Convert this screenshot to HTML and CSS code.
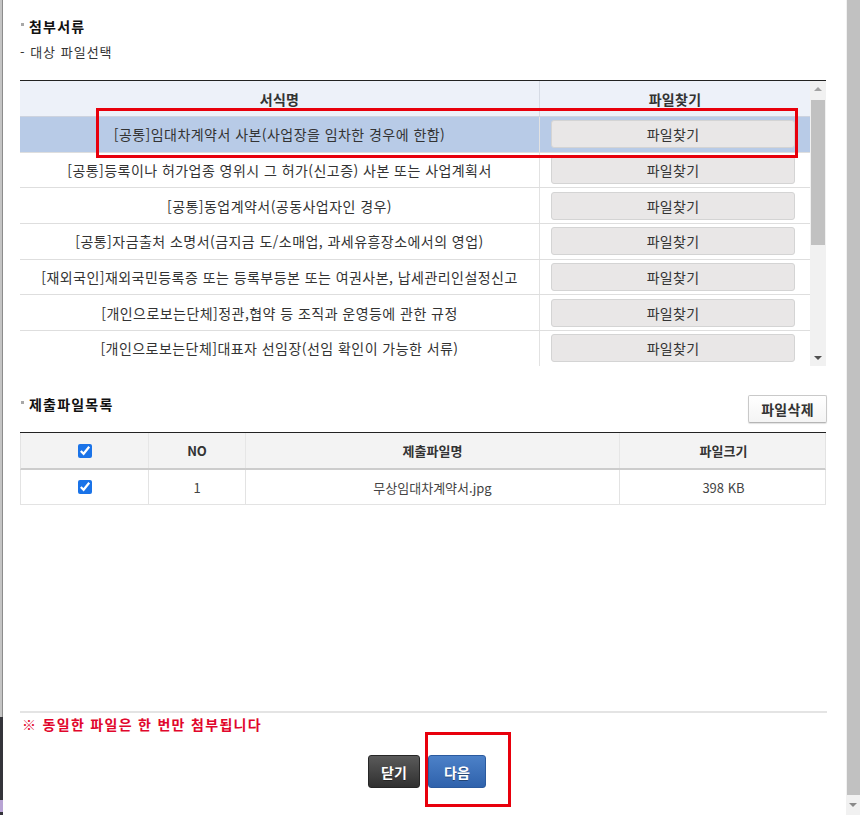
FILE: index.html
```html
<!DOCTYPE html>
<html lang="ko">
<head>
<meta charset="utf-8">
<title>첨부서류</title>
<link rel="stylesheet" href="styles.css">
</head>
<body>
<div class="frame">
  <div class="edge">
    <div class="edge-top"></div>
    <div class="edge-bottom"><div class="edge-mark"></div></div>
  </div>

  <div class="dialog">
    <h2 class="sec-title">첨부서류</h2>
    <p class="sub">- 대상 파일선택</p>

    <div class="grid-wrap">
      <div class="grid">
        <div class="g-head">
          <div class="h-name">서식명</div>
          <div class="h-btn">파일찾기</div>
        </div>
        <div class="g-row sel">
          <div class="c-name">[공통]임대차계약서 사본(사업장을 임차한 경우에 한함)</div>
          <div class="c-btn"><button class="find">파일찾기</button></div>
        </div>
        <div class="g-row">
          <div class="c-name">[공통]등록이나 허가업종 영위시 그 허가(신고증) 사본 또는 사업계획서</div>
          <div class="c-btn"><button class="find">파일찾기</button></div>
        </div>
        <div class="g-row">
          <div class="c-name">[공통]동업계약서(공동사업자인 경우)</div>
          <div class="c-btn"><button class="find">파일찾기</button></div>
        </div>
        <div class="g-row">
          <div class="c-name">[공통]자금출처 소명서(금지금 도/소매업, 과세유흥장소에서의 영업)</div>
          <div class="c-btn"><button class="find">파일찾기</button></div>
        </div>
        <div class="g-row">
          <div class="c-name">[재외국인]재외국민등록증 또는 등록부등본 또는 여권사본, 납세관리인설정신고</div>
          <div class="c-btn"><button class="find">파일찾기</button></div>
        </div>
        <div class="g-row">
          <div class="c-name">[개인으로보는단체]정관,협약 등 조직과 운영등에 관한 규정</div>
          <div class="c-btn"><button class="find">파일찾기</button></div>
        </div>
        <div class="g-row">
          <div class="c-name">[개인으로보는단체]대표자 선임장(선임 확인이 가능한 서류)</div>
          <div class="c-btn"><button class="find">파일찾기</button></div>
        </div>
      </div>
      <div class="vscroll">
        <div class="sb-btn"><span class="tri-up"></span></div>
        <div class="sb-thumb"></div>
        <div class="sb-track"></div>
        <div class="sb-btn"><span class="tri-down"></span></div>
      </div>
    </div>

    <div class="sec2">
      <h2 class="sec-title">제출파일목록</h2>
      <button class="del">파일삭제</button>
    </div>

    <div class="list">
      <div class="l-head">
        <div class="l-cell"><input type="checkbox" class="chk" checked></div>
        <div class="l-cell">NO</div>
        <div class="l-cell">제출파일명</div>
        <div class="l-cell">파일크기</div>
      </div>
      <div class="l-row">
        <div class="l-cell"><input type="checkbox" class="chk" checked></div>
        <div class="l-cell">1</div>
        <div class="l-cell">무상임대차계약서.jpg</div>
        <div class="l-cell">398 KB</div>
      </div>
    </div>

    <div class="divider"></div>
    <p class="notice">※ 동일한 파일은 한 번만 첨부됩니다</p>

    <div class="actions">
      <button class="btn-close">닫기</button>
      <button class="btn-next">다음</button>
    </div>
  </div>

  <div class="page-scroll">
    <div class="page-thumb"></div>
    <div class="page-down"><span class="tri-down light"></span></div>
  </div>

  <div class="mark mark-row"></div>
  <div class="mark mark-next"></div>
</div>
</body>
</html>
```

FILE: styles.css
```css
* { box-sizing: border-box; }
html, body { margin: 0; padding: 0; }
body {
  width: 860px;
  height: 815px;
  overflow: hidden;
  background: #fff;
  color: #333;
  font-family: "Noto Sans CJK KR", "Noto Sans", sans-serif;
  font-size: 13px;
}
.frame { position: relative; display: flex; height: 815px; }

/* left edge of the window behind */
.edge { width: 3px; display: flex; flex-direction: column; }
.edge-top { height: 717px; background: #c4c4c4; border-right: 1px solid #8c8c8c; }
.edge-bottom {
  flex: 1; background: #34343a;
  display: flex; flex-direction: column; justify-content: flex-end;
  padding-bottom: 3px;
}
.edge-mark { height: 12px; background: #b8a4d4; }

/* dialog */
.dialog {
  width: 843px;
  padding: 16px 19px 0 17px;
  display: flex;
  flex-direction: column;
}
.sec-title {
  margin: 0;
  height: 20px;
  line-height: 20px;
  font-size: 14px;
  font-weight: bold;
  letter-spacing: 1.2px;
  color: #111;
  display: flex;
  align-items: flex-start;
  gap: 5px;
}
.sec-title::before {
  content: "";
  width: 3px; height: 3px;
  margin: 7px 0 0 1px;
  background: #a8a8a8;
}
.sub { margin: 6px 0 0 0; height: 20px; line-height: 20px; color: #333; letter-spacing: 1px; }

/* document grid */
.grid-wrap {
  margin-top: 18px;
  width: 806px;
  height: 286px;
  border-top: 1px solid #222;
  display: flex;
}
.grid { width: 790px; overflow: hidden; }
.g-head {
  display: grid;
  grid-template-columns: 520px 270px;
  height: 36px;
  background: #edf1f9;
  border-bottom: 1px solid #cdd3df;
  font-size: 14px;
  font-weight: bold;
  letter-spacing: 0.3px;
  color: #333;
}
.g-head > div { display: flex; align-items: center; justify-content: center; }
.h-name { border-right: 1px solid #d6dbe5; }
.g-row {
  display: grid;
  grid-template-columns: 520px 270px;
  height: 35.7px;
  border-bottom: 1px solid #dedede;
}
.g-row.sel { background: #b8cbe7; }
.c-name {
  display: flex; align-items: center; justify-content: center;
  border-right: 1px solid #e2e2e2;
  color: #333;
  font-size: 14px;
  letter-spacing: 0.45px;
  white-space: nowrap;
}
.c-btn { display: flex; align-items: center; padding: 0 15px 0 11px; }
.find {
  width: 100%;
  height: 28px;
  border: 1px solid #d4d4d4;
  border-radius: 3px;
  background: #e9e7e7;
  color: #333;
  font: inherit;
  font-size: 14px;
  letter-spacing: 0.3px;
  padding: 0;
}

/* inner scrollbar */
.vscroll { width: 16px; background: #f1f1f1; display: flex; flex-direction: column; }
.sb-btn { height: 16px; display: flex; align-items: center; justify-content: center; }
.sb-thumb { margin: 3px 1px 0 1px; height: 145px; background: #c1c1c1; }
.sb-track { flex: 1; }
.tri-up { width: 0; height: 0; border-left: 4px solid transparent; border-right: 4px solid transparent; border-bottom: 4px solid #a3a3a3; }
.tri-down { width: 0; height: 0; border-left: 4px solid transparent; border-right: 4px solid transparent; border-top: 4px solid #505050; }
.tri-down.light { border-top-color: #8a8a8a; }

/* section 2 */
.sec2 {
  margin-top: 29px;
  height: 28px;
  display: flex;
  justify-content: space-between;
  align-items: flex-start;
}
.sec2 .sec-title { margin-top: -1px; }
.del {
  width: 79px;
  height: 28px;
  border: 1px solid #c9c9c9;
  border-bottom-color: #b5b5b5;
  border-radius: 2px;
  background: linear-gradient(#ffffff, #f4f4f4);
  box-shadow: 0 1px 1px rgba(0,0,0,0.12);
  font: inherit;
  font-size: 14px;
  font-weight: bold;
  letter-spacing: 0.3px;
  color: #333;
  padding: 0;
}

.list { margin-top: 9px; width: 806px; border-top: 1px solid #222; }
.l-head, .l-row {
  display: grid;
  grid-template-columns: 128px 97px 374px 207px;
  border-left: 1px solid #e3e3e3;
  border-right: 1px solid #e3e3e3;
}
.l-head {
  height: 37px;
  background: #f3f3f3;
  border-bottom: 2px solid #cccccc;
  font-weight: bold;
  color: #333;
}
.l-row { height: 35px; border-bottom: 1px solid #e3e3e3; color: #444; }
.l-cell {
  display: flex; align-items: center; justify-content: center;
  border-right: 1px solid #e3e3e3;
}
.l-head .l-cell { border-right-color: #e6e6e6; }
.l-cell:last-child { border-right: none; }
.chk {
  margin: 0;
  width: 14px; height: 14px;
  accent-color: #1a73e8;
}

.divider { margin-top: 206px; height: 2px; background: #e4e4e4; }
.notice {
  margin: 3px 0 0 2px;
  height: 16px;
  line-height: 16px;
  font-size: 14px;
  font-weight: bold;
  letter-spacing: 1.3px;
  color: #e1062c;
}

.actions { margin-top: 23px; display: flex; justify-content: center; gap: 8px; padding-left: 7px; }
.btn-close, .btn-next {
  height: 33px;
  border-radius: 3px;
  font: inherit;
  font-size: 14px;
  font-weight: bold;
  color: #fff;
  padding: 0;
  text-shadow: 0 1px 0 rgba(0,0,0,0.35);
}
.btn-close {
  width: 52px;
  border: 1px solid #262626;
  background: linear-gradient(#5a5a5a, #303030);
}
.btn-next {
  width: 58px;
  border: 1px solid #2b5a9e;
  background: linear-gradient(#4c81c8, #2f62ac);
}

/* outer page scrollbar */
.page-scroll { width: 14px; background: #f1f1f1; display: flex; flex-direction: column; }
.page-thumb { height: 795px; background: #c1c1c1; margin-left: 1px; }
.page-down { flex: 1; display: flex; align-items: center; justify-content: center; }

/* red annotation boxes */
.mark { position: absolute; border: 3px solid #e8000c; }
.mark-row { left: 96px; top: 108px; width: 702px; height: 50px; }
.mark-next { left: 425px; top: 732px; width: 86px; height: 75px; }
```
